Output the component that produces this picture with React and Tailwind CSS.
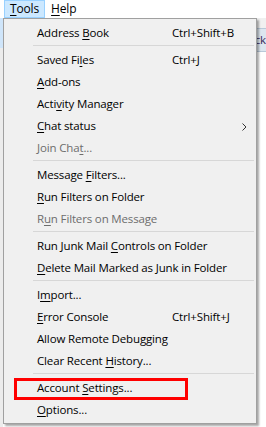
import React from 'react';

// access key letter gets an underline, like the native Windows menu
function Label({ text, accessKey }) {
	if (accessKey == null) return <span>{text}</span>;
	const i = accessKey;
	return (
		<span>
			{text.slice(0, i)}
			<span className="underline underline-offset-2">{text[i]}</span>
			{text.slice(i + 1)}
		</span>
	);
}

const groups = [
	[{ text: 'Address Book', key: 8, shortcut: 'Ctrl+Shift+B' }],
	[
		{ text: 'Saved Files', key: 8, shortcut: 'Ctrl+J' },
		{ text: 'Add-ons', key: 0 },
		{ text: 'Activity Manager', key: 4 },
		{ text: 'Chat status', key: 0, submenu: true },
		{ text: 'Join Chat...', key: 8, disabled: true }
	],
	[
		{ text: 'Message Filters...', key: 8 },
		{ text: 'Run Filters on Folder', key: 0 },
		{ text: 'Run Filters on Message', key: 1, disabled: true }
	],
	[
		{ text: 'Run Junk Mail Controls on Folder', key: 14 },
		{ text: 'Delete Mail Marked as Junk in Folder', key: 0 }
	],
	[
		{ text: 'Import...', key: 1 },
		{ text: 'Error Console', key: 0, shortcut: 'Ctrl+Shift+J' },
		{ text: 'Allow Remote Debugging' },
		{ text: 'Clear Recent History...', key: 13 }
	],
	[
		{ text: 'Account Settings...', key: 8, marked: true },
		{ text: 'Options...', key: 0 }
	]
];

function MenuItem({ item }) {
	return (
		<div
			className={`relative flex items-center h-[22px] pl-[33px] ${item.disabled ? 'text-[#6d6d6d]' : 'text-black'}`}
		>
			<span className="w-[135px] whitespace-nowrap">
				<Label text={item.text} accessKey={item.key} />
			</span>
			{item.shortcut && <span className="whitespace-nowrap">{item.shortcut}</span>}
			{item.submenu && (
				<svg className="absolute left-[238px] top-[8px]" width="5" height="8" viewBox="0 0 5 8">
					<path d="M0.5 0.5 L4 4 L0.5 7.5" fill="none" stroke="#333" strokeWidth="1" />
				</svg>
			)}
			{item.marked && (
				<span className="absolute left-[10px] top-[1px] w-[174px] h-[22px] border-[3px] border-[#ff0000]" />
			)}
		</div>
	);
}

export default function App() {
	return (
		<div
			className="relative w-[266px] h-[427px] overflow-hidden bg-white text-[11.5px] tracking-[-0.15px] leading-none"
			style={{ fontFamily: '"Open Sans", "Noto Sans", sans-serif' }}
		>
			{/* Menu bar */}
			<div className="flex items-center h-[18px] bg-white pl-[4px] text-[12px]">
				<div className="flex items-center h-[18px] px-[5px] bg-[#cce8ff] border border-[#99d1ff]">
					<Label text="Tools" accessKey={0} />
				</div>
				<div className="px-[6px]">
					<Label text="Help" accessKey={0} />
				</div>
			</div>

			{/* Window behind the menu */}
			<div className="flex h-[409px]">
				<div className="w-[3px] flex flex-col">
					<div className="h-[30px] bg-[#cfe5fa]" />
					<div className="flex-1 bg-[#ececec]" />
				</div>
				<div className="flex-1 flex flex-col">
					<div className="h-[10px] bg-[#f0f0f0]" />
					<div className="h-[24px] bg-[#dde6ef] border-y border-[#b9c9d9] flex items-center justify-end text-[#3a2a5a] overflow-hidden">
						<span className="whitespace-nowrap">Quick</span>
					</div>
					<div className="flex-1 bg-white" />
				</div>
			</div>

			{/* Tools dropdown */}
			<div className="absolute left-[3px] top-[18px] w-[254px] pt-[3px] pb-[2px] bg-[#f0f0f0] border border-[#a0a0a0] shadow-[2px_2px_2px_rgba(0,0,0,0.35)]">
				{groups.map((group, gi) => (
					<div key={gi}>
						{gi > 0 && (
							<div className="h-[5px] pt-[1px] pl-[29px] pr-[2px]">
								<div className="h-px bg-[#d7d7d7]" />
							</div>
						)}
						{group.map(item => (
							<MenuItem key={item.text} item={item} />
						))}
					</div>
				))}
			</div>
		</div>
	);
}
